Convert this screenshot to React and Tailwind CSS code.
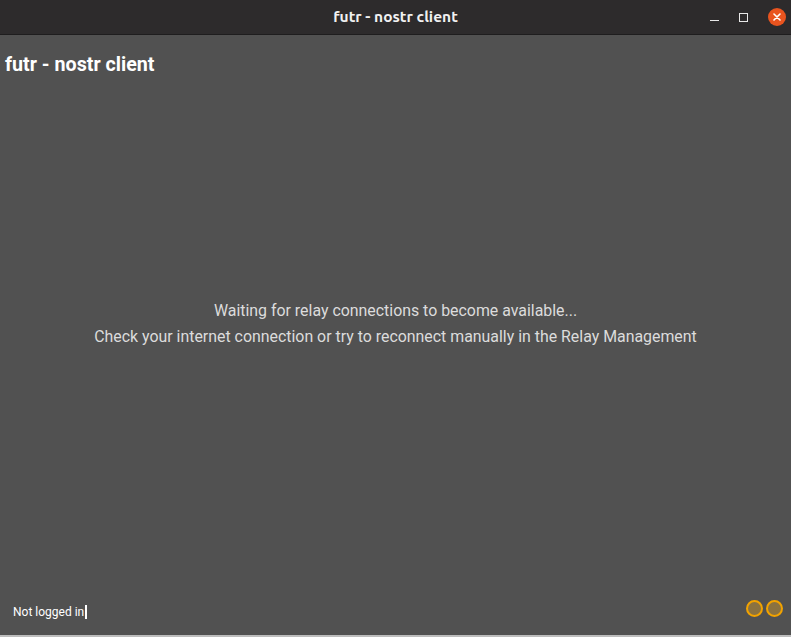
import React from "react";

function TitleBar() {
  return (
    <div className="relative flex h-[35px] items-center justify-center bg-[#2d2b2c] border-b border-[#1e1d1e]">
      <span className="font-['Ubuntu','DejaVu_Sans',sans-serif] text-[15.5px] font-bold text-[#f2f2f2]">
        futr - nostr client
      </span>
      <div className="absolute right-[5px] top-0 flex h-full items-center gap-[20px]">
        <span className="mt-[6px] block h-[1px] w-[9px] bg-[#e8e8e8]" />
        <span className="block h-[9px] w-[9px] border border-[#e8e8e8]" />
        <span className="flex h-[18px] w-[18px] items-center justify-center rounded-full bg-[#e9541f]">
          <svg width="8" height="8" viewBox="0 0 8 8">
            <path d="M1 1L7 7M7 1L1 7" stroke="#fff" strokeWidth="1.6" strokeLinecap="round" />
          </svg>
        </span>
      </div>
    </div>
  );
}

export default function App() {
  return (
    <div className="flex h-[637px] w-[791px] flex-col bg-[#515151] font-['Roboto',sans-serif]">
      <TitleBar />
      <div className="flex flex-1 flex-col">
        <h1 className="ml-[5px] mt-[17px] text-[19.7px] font-bold leading-[26px] text-white">futr - nostr client</h1>
        <div className="flex flex-1 flex-col items-center justify-center pb-[30px] text-[15.9px] leading-[26px] text-[#dcdcdc]">
          <p>Waiting for relay connections to become available...</p>
          <p>Check your internet connection or try to reconnect manually in the Relay Management</p>
        </div>
        <div className="mb-[12px] flex h-[24px] items-center justify-between pl-[13px] pr-[8px]">
          <span className="mt-[2px] flex items-center text-[12px] text-white">
            Not logged in
            <span className="ml-[1px] inline-block h-[14px] w-[2px] bg-white" />
          </span>
          <div className="mb-[6px] flex gap-[3px]">
            <span className="block h-[17px] w-[17px] rounded-full border-2 border-[#f2a300] bg-[#8b7240]" />
            <span className="block h-[17px] w-[17px] rounded-full border-2 border-[#f2a300] bg-[#8b7240]" />
          </div>
        </div>
      </div>
      <div className="h-[2px] bg-[#bdbdbd]" />
    </div>
  );
}
